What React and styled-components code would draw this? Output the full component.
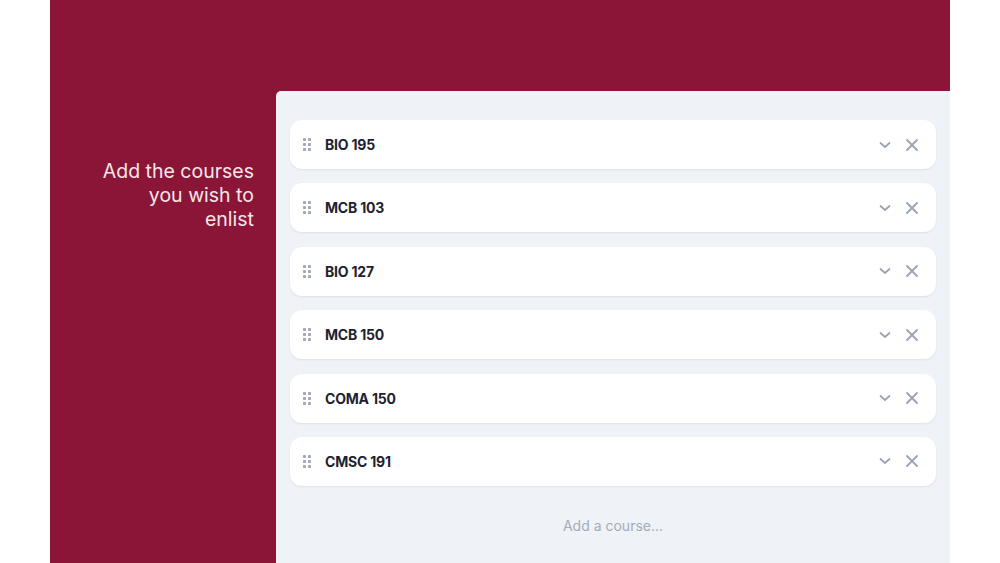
import styled, { createGlobalStyle } from "styled-components";

const GlobalStyle = createGlobalStyle`
  html, body {
    margin: 0;
    padding: 0;
    background: #ffffff;
  }
  body {
    font-family: Inter, "Noto Sans", sans-serif;
  }
`;

const courses = ["BIO 195", "MCB 103", "BIO 127", "MCB 150", "COMA 150", "CMSC 191"];

const Page = styled.div`
  width: 1000px;
  height: 563px;
  display: flex;
  justify-content: center;
  overflow: hidden;
`;

const Frame = styled.div`
  width: 900px;
  height: 563px;
  background: #8b1536;
  display: grid;
  grid-template-columns: 226px 1fr;
  padding-top: 91px;
  box-sizing: border-box;
`;

const Intro = styled.h2`
  margin: 0;
  padding: 68px 22px 0 0;
  text-align: right;
  font-size: 19.5px;
  line-height: 24px;
  font-weight: 400;
  color: #f7e6ea;
`;

const Panel = styled.div`
  background: #eff2f7;
  border-top-left-radius: 5px;
  padding: 29px 14px 0 14px;
  display: flex;
  flex-direction: column;
  gap: 14.4px;
`;

const Card = styled.div`
  height: 49px;
  background: #ffffff;
  border-radius: 12px;
  box-shadow: 0 1px 2px rgba(30, 40, 70, 0.08);
  display: flex;
  align-items: center;
  padding: 0 17px 0 13px;
`;

const Handle = styled.div`
  display: grid;
  grid-template-columns: repeat(2, 3px);
  grid-auto-rows: 3px;
  gap: 2px;
  margin-right: 14px;
  span {
    background: #a3abbb;
    border-radius: 0.5px;
  }
`;

const Name = styled.span`
  flex: 1;
  font-size: 14px;
  font-weight: 700;
  color: #1e2230;
  letter-spacing: -0.2px;
`;

const Actions = styled.div`
  display: flex;
  align-items: center;
  gap: 13px;
  color: #9aa2b4;
`;

const AddCourse = styled.div`
  margin-top: 17px;
  text-align: center;
  font-size: 14px;
  color: #a5acb9;
`;

function Chevron() {
  return (
    <svg width="14" height="12" viewBox="0 0 14 12" fill="none" stroke="currentColor" strokeWidth="1.7" strokeLinecap="round" strokeLinejoin="round">
      <path d="M2.5 4 7 8l4.5-4" />
    </svg>
  );
}

function Cross() {
  return (
    <svg width="14" height="14" viewBox="0 0 14 14" fill="none" stroke="currentColor" strokeWidth="1.8" strokeLinecap="round">
      <path d="M2 2l10 10M12 2 2 12" />
    </svg>
  );
}

function CourseCard({ name }) {
  return (
    <Card>
      <Handle>
        {Array.from({ length: 6 }).map((_, i) => (
          <span key={i} />
        ))}
      </Handle>
      <Name>{name}</Name>
      <Actions>
        <Chevron />
        <Cross />
      </Actions>
    </Card>
  );
}

export default function App() {
  return (
    <>
      <GlobalStyle />
      <Page>
        <Frame>
          <Intro>
            Add the courses
            <br />
            you wish to
            <br />
            enlist
          </Intro>
          <Panel>
            {courses.map((c) => (
              <CourseCard key={c} name={c} />
            ))}
            <AddCourse>Add a course...</AddCourse>
          </Panel>
        </Frame>
      </Page>
    </>
  );
}
